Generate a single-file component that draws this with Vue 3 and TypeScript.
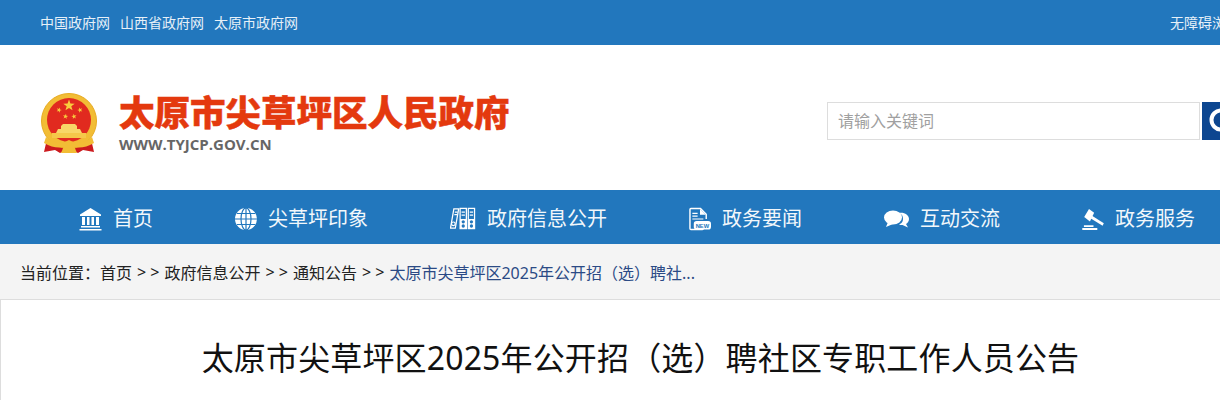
<script setup lang="ts">
const topLinks = ['中国政府网', '山西省政府网', '太原市政府网'];
const navItems = [
  { key: 'home', label: '首页' },
  { key: 'globe', label: '尖草坪印象' },
  { key: 'files', label: '政府信息公开' },
  { key: 'news', label: '政务要闻' },
  { key: 'chat', label: '互动交流' },
  { key: 'gavel', label: '政务服务' },
];
const crumbs = ['首页', '政府信息公开', '通知公告'];

const star = (cx: number, cy: number, r: number, rot = 0) => {
  const pts: string[] = [];
  for (let i = 0; i < 10; i++) {
    const rad = i % 2 ? r * 0.4 : r;
    const a = ((-90 + rot + i * 36) * Math.PI) / 180;
    pts.push(`${(cx + rad * Math.cos(a)).toFixed(1)},${(cy + rad * Math.sin(a)).toFixed(1)}`);
  }
  return pts.join(' ');
};
const stars = [
  star(58, 25, 12),
  star(38, 34, 5.5, 20),
  star(80, 34, 5.5, -20),
  star(51, 47, 5.5, 10),
  star(68, 47, 5.5, -10),
];
</script>

<template>
  <div class="page">
    <div class="topbar">
      <div class="top-links">
        <a v-for="link in topLinks" :key="link">{{ link }}</a>
      </div>
      <a class="access">无障碍浏览</a>
    </div>

    <header class="masthead">
      <svg class="emblem" viewBox="0 0 120 122" width="60" height="61">
        <path d="M14 92 L8 118 L30 114 L40 120 L58 112 L76 120 L86 114 L108 118 L102 92 Z" fill="#cc1a1e" />
        <circle cx="58" cy="56" r="55" fill="#f2bd35" stroke="#e8ab22" stroke-width="2" />
        <circle cx="58" cy="54" r="44" fill="#e12a1f" />
        <polygon v-for="s in stars" :key="s" :points="s" fill="#f8cd3e" />
        <path d="M42 66 L46 62 H70 L74 66 V72 H80 L84 80 H32 L36 72 H42 Z" fill="#f8d768" />
        <path d="M24 80 H92 V90 H24 Z" fill="#f5c84a" />
        <path d="M12 88 Q36 108 58 94 Q80 108 104 88 L108 100 Q80 116 58 104 Q36 116 8 100 Z" fill="#f2bd35" />
        <path d="M48 106 H68 L74 120 H42 Z" fill="#f2bd35" />
      </svg>
      <div class="brand">
        <div class="site-name">太原市尖草坪区人民政府</div>
        <div class="site-url">WWW.TYJCP.GOV.CN</div>
      </div>
      <div class="search">
        <input class="search-input" type="text" placeholder="请输入关键词" />
        <button class="search-btn" type="button" aria-label="搜索">
          <svg viewBox="0 0 38 38" width="38" height="38">
            <circle cx="19" cy="18" r="9.500" fill="none" stroke="#fff" stroke-width="4" />
            <path d="M26 25 L32 31" stroke="#fff" stroke-width="4" stroke-linecap="round" />
          </svg>
        </button>
      </div>
    </header>

    <nav class="mainnav">
      <a v-for="item in navItems" :key="item.key" class="nav-item">
        <svg v-if="item.key === 'home'" class="nav-icon" width="23" height="24" viewBox="0 0 23 24" fill="#fff">
          <path d="M11.500 1 L22 7.500 V9 H1 V7.500 Z" />
          <path d="M3 10 h3 v8 H3 Z M8 10 h2.500 v8 H8 Z M12.500 10 H15 v8 h-2.500 Z M17 10 h3 v8 h-3 Z" />
          <path d="M2 19 h19 v1.500 H2 Z M0.500 22 h22 v1.500 H0.500 Z" />
        </svg>
        <svg v-else-if="item.key === 'globe'" class="nav-icon" width="22" height="22" viewBox="0 0 22 22">
          <circle cx="11" cy="11" r="11" fill="#fff" />
          <g stroke="#2277bd" stroke-width="1.200" fill="none">
            <ellipse cx="11" cy="11" rx="5" ry="11" />
            <path d="M11 0 V22 M0 11 H22 M2 5.500 H20 M2 16.500 H20" />
          </g>
        </svg>
        <svg v-else-if="item.key === 'files'" class="nav-icon" width="26" height="23" viewBox="0 0 27 23">
          <g fill="none" stroke="#fff" stroke-width="1.300">
            <path d="M4 1.500 h5 l-3.500 20 h-5 Z" />
            <rect x="10.500" y="1" width="6.500" height="21" />
            <rect x="19" y="1" width="6.500" height="21" />
            <path d="M5 5 h3 M4.500 7.500 h3 M12 5 h3.500 M12 8 h3.500 M20.500 5 h3.500 M20.500 8 h3.500" />
          </g>
          <g fill="#fff">
            <rect x="10.500" y="12" width="6.500" height="10" />
            <rect x="19" y="12" width="6.500" height="10" />
          </g>
          <g fill="#2277bd">
            <circle cx="13.750" cy="15" r="1.700" />
            <circle cx="13.750" cy="19.300" r="1.700" />
            <circle cx="22.250" cy="15" r="1.700" />
            <circle cx="22.250" cy="19.300" r="1.700" />
          </g>
          <circle cx="3.500" cy="17" r="1.900" fill="none" stroke="#fff" stroke-width="1.200" />
        </svg>
        <svg v-else-if="item.key === 'news'" class="nav-icon" width="22" height="24" viewBox="0 0 23 24">
          <path
            d="M15 18 V22 Q15 23 14 23 H2 Q1 23 1 22 V2 Q1 1 2 1 H12 L18 7 V12"
            fill="none"
            stroke="#fff"
            stroke-width="1.500"
          />
          <path d="M11.500 1.500 V7.500 H17.500 Z" fill="#fff" />
          <path d="M3.500 6 H9 M3.500 9 H9 M3.500 12 H15" stroke="#fff" stroke-width="1.300" />
          <rect x="5" y="14" width="18" height="9" rx="3" fill="#fff" />
          <text x="14" y="21" text-anchor="middle" class="new-tag">NEW</text>
        </svg>
        <svg v-else-if="item.key === 'chat'" class="nav-icon" width="25" height="18" viewBox="0 0 25 18" fill="#fff">
          <path d="M15 3 C20 2 25 5 25 9 C25 11.500 23.500 13 22 14 L24 17.500 L18.500 15 C17 15 16 15 15 14.500 C19 13 20 9 18 5 Z" />
          <ellipse cx="9" cy="7.500" rx="9" ry="7" />
          <path d="M4 12 L2 17 L9 14 Z" />
        </svg>
        <svg v-else class="nav-icon" width="22" height="24" viewBox="0 0 23 24" fill="#fff">
          <path d="M7.300 1.500 L12.700 5.500 L8.300 14.500 L2.300 10 Z" />
          <path d="M10.500 8.500 L22.800 16.500 L21.500 19 L9.200 11.500 Z" />
          <path d="M2 18.500 h10 v1.800 H2 Z M0.300 21.500 h15.700 v2 H0.300 Z" />
        </svg>
        <span>{{ item.label }}</span>
      </a>
    </nav>

    <div class="crumbs">
      <span class="here">当前位置：</span>
      <template v-for="c in crumbs" :key="c">
        <a>{{ c }}</a>
        <span>&gt; &gt;</span>
      </template>
      <a class="current">太原市尖草坪区2025年公开招（选）聘社...</a>
    </div>

    <main class="article">
      <h1>太原市尖草坪区2025年公开招（选）聘社区专职工作人员公告</h1>
    </main>
  </div>
</template>

<style>
html,
body {
  margin: 0;
  overflow: hidden;
  height: 400px;
  background: #fff;
}
</style>

<style scoped>
.page {
  width: 1280px;
  font-family: "Noto Sans", "Noto Sans CJK SC", sans-serif;
}

.topbar {
  height: 45px;
  background: #2277bd;
  display: flex;
  align-items: center;
  justify-content: space-between;
  padding: 0 0 2px 40px;
  box-sizing: border-box;
  color: #e6f0f8;
  font-size: 14px;
}

.top-links {
  display: flex;
  gap: 10px;
}

.access {
  width: 110px;
  white-space: nowrap;
}

.masthead {
  height: 145px;
  display: flex;
  align-items: center;
  padding: 8px 0 0 40px;
  box-sizing: border-box;
}

.emblem {
  flex: none;
  margin-right: 19px;
  margin-top: 4px;
}

.brand {
  width: 708px;
  margin-top: 2px;
}

.site-name {
  font-size: 35.5px;
  line-height: 40px;
  font-weight: 900;
  -webkit-text-stroke: 0.5px #e4390e;
  color: #e4390e;
  white-space: nowrap;
}

.site-url {
  margin-top: 3px;
  font-family: "Open Sans", "Noto Sans", sans-serif;
  font-size: 15px;
  line-height: 18px;
  font-weight: 700;
  color: #666;
}

.search {
  display: flex;
  gap: 2px;
  margin-top: -1px;
}

.search-input {
  width: 373px;
  height: 38px;
  box-sizing: border-box;
  border: 1px solid #ddd;
  padding: 0 10px;
  font-family: inherit;
  font-size: 16px;
  outline: none;
}

.search-input::placeholder {
  color: #a0a0a0;
}

.search-btn {
  width: 76px;
  height: 38px;
  border: none;
  padding: 0;
  background: #0d4690;
  display: flex;
}

.mainnav {
  height: 54px;
  background: #2277bd;
  display: flex;
  align-items: center;
  gap: 82px;
  padding-left: 79px;
}

.nav-item {
  display: flex;
  align-items: center;
  gap: 11px;
  color: #f2f7fb;
  font-size: 20px;
  white-space: nowrap;
}

.nav-icon {
  flex: none;
  margin-top: 3px;
}

.new-tag {
  font-family: "Liberation Sans", sans-serif;
  font-size: 6px;
  font-weight: 700;
  fill: #2277bd;
}

.crumbs {
  height: 56px;
  box-sizing: border-box;
  background: #f4f4f4;
  border-bottom: 1px solid #ddd;
  padding: 1px 0 0 20px;
  display: flex;
  align-items: center;
  gap: 5px;
  font-size: 16px;
  color: #222;
  white-space: nowrap;
}

.here {
  margin-right: -5px;
}

.current {
  color: #2b4a85;
}

.article {
  border-left: 1px solid #ddd;
  padding-top: 35px;
  height: 100px;
  box-sizing: border-box;
}

h1 {
  margin: 0;
  text-align: center;
  font-size: 32px;
  line-height: 46px;
  font-weight: 400;
  letter-spacing: 0.15px;
  color: #111;
  white-space: nowrap;
}
</style>
